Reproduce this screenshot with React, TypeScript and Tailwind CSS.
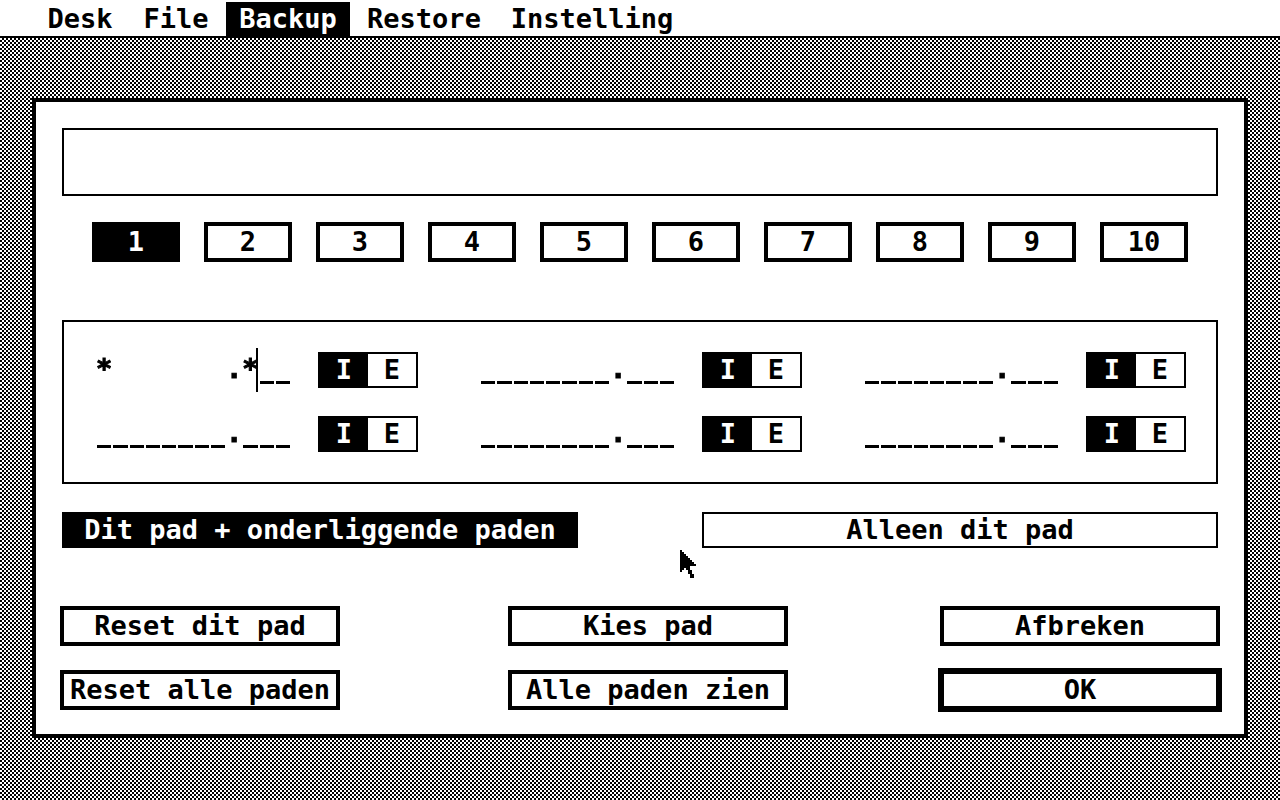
import clsx from 'clsx';
import type { ReactNode } from 'react';

const menus = [
  { title: 'Desk', width: 'w-24' },
  { title: 'File', width: 'w-24' },
  { title: 'Backup', width: 'w-32', active: true },
  { title: 'Restore', width: 'w-36' },
  { title: 'Instelling', width: 'w-48' },
];

const paths = ['1', '2', '3', '4', '5', '6', '7', '8', '9', '10'];

const masks = [
  '*       .*__',
  '________.___',
  '________.___',
  '________.___',
  '________.___',
  '________.___',
];

interface OptionProps {
  name: string;
  className: string;
  defaultChecked?: boolean;
  children: ReactNode;
}

const Option = ({ name, className, defaultChecked, children }: OptionProps) => (
  <label
    className={clsx(
      'relative flex items-center justify-center border-black has-[:checked]:bg-black has-[:checked]:text-white',
      className
    )}>
    <input
      type="radio"
      name={name}
      defaultChecked={defaultChecked}
      className="sr-only"
    />
    {children}
  </label>
);

const PushButton = ({
  children,
  isDefault,
}: {
  children: ReactNode;
  isDefault?: boolean;
}) => (
  <button
    type="button"
    className={clsx(
      'flex items-center justify-center whitespace-nowrap border-black',
      isDefault
        ? '-m-[2px] h-11 w-[284px] border-[6px]'
        : 'h-10 w-[280px] border-4'
    )}>
    {children}
  </button>
);

const FilterField = ({ index, value }: { index: number; value: string }) => (
  <div className="flex items-center justify-between pl-8 pr-[30px]">
    <div className="relative">
      {/* the mask cuts the blanks into separate character cells */}
      <input
        type="text"
        aria-label={`Masker ${index + 1}`}
        defaultValue={value}
        maxLength={12}
        spellCheck={false}
        className="block h-9 w-[12ch] bg-transparent pb-1 outline-none [-webkit-text-stroke:1px_black] [mask-image:repeating-linear-gradient(90deg,transparent_0_1px,#000_1px_calc(1ch-1px),transparent_calc(1ch-1px)_1ch)]"
      />
      {index === 0 && (
        <span className="absolute -top-1 left-40 h-11 w-[2px] bg-black" />
      )}
    </div>
    <div className="flex h-9 w-[100px] border-2 border-black">
      <Option name={`mode-${index}`} className="w-12" defaultChecked>
        I
      </Option>
      <Option name={`mode-${index}`} className="w-12">
        E
      </Option>
    </div>
  </div>
);

const Pointer = () => (
  <svg
    className="pointer-events-none absolute left-[680px] top-[550px]"
    width="16"
    height="28"
    viewBox="0 0 8 14"
    shapeRendering="crispEdges"
    aria-hidden="true">
    <path d="M0 0h1v1h1v1h1v1h1v1h1v1h1v1h1v1h1v1H5v2h1v2h1v2H5v-2H4v-2H3V9H2v1H1v1H0z" />
  </svg>
);

export default function App() {
  return (
    <div className="relative flex min-h-screen flex-col bg-black bg-[repeating-linear-gradient(180deg,#000_0_2px,#fff_2px_4px),repeating-linear-gradient(90deg,#000_0_2px,#fff_2px_4px)] bg-blend-difference font-['DejaVu_Sans_Mono',monospace] text-[27px] font-bold leading-8 text-black">
      <nav className="flex border-b-2 border-black bg-white pl-8 pt-[2px]">
        {menus.map(({ title, width, active }) => (
          <div key={title} className={clsx('flex px-[2px]', width)}>
            <button
              type="button"
              className={clsx(
                'flex h-[34px] flex-1 items-center justify-center',
                active && 'bg-black text-white'
              )}>
              {title}
            </button>
          </div>
        ))}
      </nav>

      <main className="px-8 py-[60px]">
        <form className="border-4 border-black bg-white px-[26px] pb-6 pt-[26px]">
          <output className="block h-[68px] border-2 border-black" />

          <div className="mt-[26px] flex justify-center gap-6">
            {paths.map((path, i) => (
              <Option
                key={path}
                name="path"
                className="h-10 w-[88px] border-4"
                defaultChecked={i === 0}>
                {path}
              </Option>
            ))}
          </div>

          <div className="mt-[58px] grid grid-cols-3 gap-y-7 border-2 border-black py-[30px]">
            {masks.map((value, i) => (
              <FilterField key={i} index={i} value={value} />
            ))}
          </div>

          <div className="mt-7 grid grid-cols-2 gap-[124px]">
            <Option name="depth" className="h-9 border-2" defaultChecked>
              Dit pad + onderliggende paden
            </Option>
            <Option name="depth" className="h-9 border-2">
              Alleen dit pad
            </Option>
          </div>

          <div className="-mx-[2px] mt-[58px] flex justify-between">
            <div className="flex flex-col gap-6">
              <PushButton>Reset dit pad</PushButton>
              <PushButton>Reset alle paden</PushButton>
            </div>
            <div className="flex flex-col gap-6 pl-4">
              <PushButton>Kies pad</PushButton>
              <PushButton>Alle paden zien</PushButton>
            </div>
            <div className="flex flex-col gap-6">
              <PushButton>Afbreken</PushButton>
              <PushButton isDefault>OK</PushButton>
            </div>
          </div>
        </form>
      </main>

      <Pointer />
    </div>
  );
}
